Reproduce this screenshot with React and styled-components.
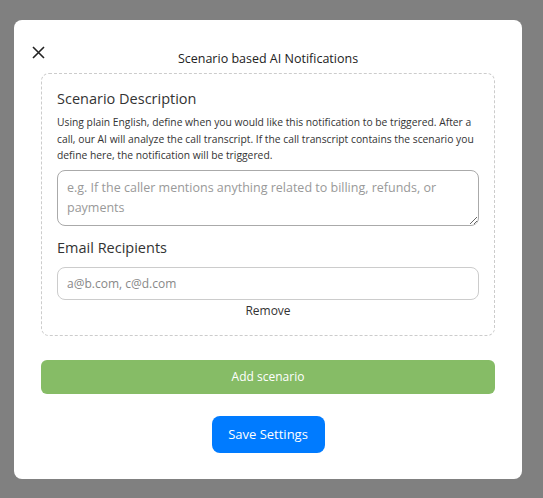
import React from 'react'
import styled, { createGlobalStyle } from 'styled-components'

const GlobalStyle = createGlobalStyle`
  html, body {
    margin: 0;
    padding: 0;
    background: #808080;
  }
  body {
    font-family: "Open Sans", "Noto Sans", sans-serif;
    color: #333;
  }
`

const Backdrop = styled.div`
  min-height: 498px;
  padding: 20px 21px 19px 14px;
  box-sizing: border-box;
`

const Modal = styled.div`
  background: #fff;
  border-radius: 8px;
  width: 508px;
  box-sizing: border-box;
  padding: 0 27px 26px;
  display: flex;
  flex-direction: column;
`

const Header = styled.div`
  position: relative;
  display: flex;
  justify-content: center;
  align-items: center;
  height: 53px;
`

const CloseButton = styled.button`
  position: absolute;
  left: -10px;
  top: 25px;
  width: 14px;
  height: 14px;
  padding: 0;
  border: 0;
  background: none;
  display: flex;
  align-items: center;
  justify-content: center;
  cursor: pointer;
`

const Title = styled.h2`
  margin: 24px 0 0;
  font-size: 12.5px;
  font-weight: 400;
  color: #222;
`

const ScenarioCard = styled.div`
  border: 1px dashed #ccc;
  border-radius: 8px;
  padding: 15px 15px 16px;
  display: flex;
  flex-direction: column;
`

const SectionLabel = styled.div`
  font-size: 14.5px;
  line-height: 20px;
  color: #333;
`

const HelpText = styled.p`
  margin: 5px 0 6px;
  font-size: 10.3px;
  line-height: 16.5px;
  color: #333;
`

const TextArea = styled.textarea`
  box-sizing: border-box;
  width: 100%;
  height: 56px;
  border: 1px solid #aaa;
  border-radius: 8px;
  padding: 7px 9px;
  font-family: inherit;
  font-size: 12.5px;
  line-height: 20px;
  color: #333;
  resize: vertical;
  margin-bottom: 12px;

  &::placeholder {
    color: #999;
  }
`

const TextInput = styled.input`
  box-sizing: border-box;
  width: 100%;
  height: 33px;
  border: 1px solid #ccc;
  border-radius: 8px;
  padding: 0 9px;
  font-family: inherit;
  font-size: 12px;
  color: #333;
  margin-top: 9px;

  &::placeholder {
    color: #888;
  }
`

const RemoveLink = styled.button`
  align-self: center;
  border: 0;
  background: none;
  padding: 0;
  margin-top: 2px;
  font-family: inherit;
  font-size: 12px;
  line-height: 17px;
  color: #333;
  cursor: pointer;
`

const AddButton = styled.button`
  margin-top: 24px;
  height: 34px;
  border: 0;
  border-radius: 6px;
  background: #86bc66;
  color: #fff;
  font-family: inherit;
  font-size: 12px;
  cursor: pointer;
`

const SaveButton = styled.button`
  align-self: center;
  margin-top: 22px;
  width: 113px;
  height: 37px;
  border: 0;
  border-radius: 8px;
  background: #007bff;
  color: #fff;
  font-family: inherit;
  font-size: 13px;
  cursor: pointer;
`

const CloseIcon = () => (
  <svg width="13" height="13" viewBox="0 0 13 13">
    <path d="M1 1 L12 12 M12 1 L1 12" stroke="#222" strokeWidth="1.6" fill="none" />
  </svg>
)

export default function App() {
  return (
    <>
      <GlobalStyle />
      <Backdrop>
        <Modal>
          <Header>
            <CloseButton aria-label="Close">
              <CloseIcon />
            </CloseButton>
            <Title>Scenario based AI Notifications</Title>
          </Header>
          <ScenarioCard>
            <SectionLabel>Scenario Description</SectionLabel>
            <HelpText>
              Using plain English, define when you would like this notification to be triggered. After a
              call, our AI will analyze the call transcript. If the call transcript contains the scenario you
              define here, the notification will be triggered.
            </HelpText>
            <TextArea placeholder="e.g. If the caller mentions anything related to billing, refunds, or payments" />
            <SectionLabel>Email Recipients</SectionLabel>
            <TextInput placeholder="a@b.com, c@d.com" />
            <RemoveLink>Remove</RemoveLink>
          </ScenarioCard>
          <AddButton>Add scenario</AddButton>
          <SaveButton>Save Settings</SaveButton>
        </Modal>
      </Backdrop>
    </>
  )
}
